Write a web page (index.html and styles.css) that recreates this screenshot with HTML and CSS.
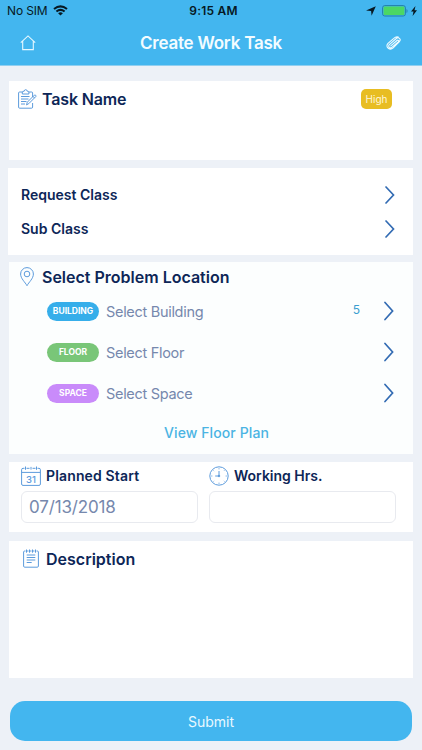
FILE: index.html
```html
<!DOCTYPE html>
<html lang="en">
<head>
<meta charset="utf-8">
<title>Create Work Task</title>
<link rel="stylesheet" href="styles.css">
</head>
<body>
<header class="header">
  <div class="status">
    <div class="status-left"><span>No SIM</span>
      <svg width="15" height="11" viewBox="0 0 15 11" fill="none" stroke="#071923" stroke-width="2"><path d="M1 4.1Q7.5-1.4 14 4.1M3.4 6.6Q7.5 3.1 11.6 6.6"/><path d="M5.1 8.2Q7.5 6.3 9.9 8.2L7.5 10.6Z" fill="#071923" stroke="none"/></svg>
    </div>
    <span class="time">9:15 AM</span>
    <div class="status-right">
      <svg class="arrow" width="10" height="10" viewBox="0 0 10 10"><path d="M9.8.2 5.6 9.7 5.1 5 0 4.6Z" fill="#071923"/></svg>
      <svg width="26" height="12" viewBox="0 0 26 12"><rect x=".6" y=".6" width="22.8" height="10.4" rx="2.2" fill="#42b8e8" stroke="#237eaa" stroke-width="1"/><rect x="1.6" y="1.6" width="20.8" height="8.4" rx="1" fill="#4bd765"/><path d="M24.5 4v4q1-.6 1-2t-1-2" fill="#237eaa"/></svg>
      <svg class="bolt" width="6" height="10" viewBox="0 0 6 10"><path d="M4.5 0 0 5.6h2.500L1.600 10 6 4.200H3.500Z" fill="#071923"/></svg>
    </div>
  </div>
  <div class="nav">
    <svg width="16" height="16" viewBox="0 0 16 16" fill="none" stroke="#e6f8ff" stroke-width="1.1"><path d="M.8 7.700 8 .9l7.200 6.800M2.700 6.200v8.400h10.600V6.200"/></svg>
    <h1>Create Work Task</h1>
    <svg class="clip" width="16" height="14" viewBox="0 0 16 14" fill="none" stroke="#effbff" stroke-width="1.1" stroke-linecap="round"><path d="M4.800 9.900 11 4.500c1-.9 2.200.3 1.200 1.300L6.100 11.200C4.100 13 1.500 10.500 3.300 8.700l7-6.200c2.300-2 5.200.8 3.100 3L7.200 11.900c-1.500 1.400-3.500 1.500-4.900.4-1.700-1.300-1.800-3.300-.3-4.900l5.800-5.100c1.300-1.200 3-1.700 4.500-1.200"/></svg>
  </div>
</header>
<main>
  <section class="card task">
    <svg width="19" height="20" viewBox="0 0 19 20" fill="none" stroke="#5c9bdc"><path d="M4.400 3H1.500Q.6 3 .6 4v14q0 1.200 1 1.200h12q1 0 1-1.200v-4M14.600 8V4q0-1-1-1h-2.800M4.300 5V3q0-.8 1.900-.8Q6.300.7 7.700.7T9.200 2.200q1.700 0 1.700.8v2ZM3 7.500h8.500M3 10h7.500M3 12.500h5.500M3 15h4M8.500 15.900l.8-2.700 7-7q.7-.6 1.400.1t.1 1.300l-7 7ZM15 7.400l1.600 1.700"/></svg>
    <h2>Task Name</h2><span class="priority">High</span>
  </section>
  <section class="card classes">
    <div class="class-row"><span>Request Class</span><svg width="10" height="18" viewBox="0 0 10 18"><path d="m1 1 7.500 8L1 17"/></svg></div>
    <div class="class-row"><span>Sub Class</span><svg width="10" height="18" viewBox="0 0 10 18"><path d="m1 1 7.500 8L1 17"/></svg></div>
  </section>
  <section class="card location">
    <div class="heading"><svg width="14" height="20" viewBox="0 0 14 20" fill="none" stroke="#5c9bdc"><path d="M7 18.700C5.200 15.200.6 11.600.6 7a6.400 6.400 0 0 1 12.800 0c0 4.600-4.600 8.200-6.400 11.700Z"/><circle cx="7" cy="7" r="2.800"/></svg><h2>Select Problem Location</h2></div>
    <div class="place"><b class="blue">BUILDING</b><span>Select Building</span><i>5</i><svg width="10" height="20" viewBox="0 0 10 20"><path d="M1 1.500 8.600 10 1 18.500"/></svg></div>
    <div class="place"><b class="green">FLOOR</b><span>Select Floor</span><svg width="10" height="20" viewBox="0 0 10 20"><path d="M1 1.500 8.600 10 1 18.500"/></svg></div>
    <div class="place"><b class="purple">SPACE</b><span>Select Space</span><svg width="10" height="20" viewBox="0 0 10 20"><path d="M1 1.500 8.600 10 1 18.500"/></svg></div>
    <a class="plan"><span>View Floor Plan</span></a>
  </section>
  <section class="card schedule">
    <div class="start"><div class="label"><svg width="20" height="20" viewBox="0 0 20 20" fill="none" stroke="#5c9bdc"><path d="M3.500 2.300H2q-1.400 0-1.400 1.500V18q0 1.400 1.400 1.400h16q1.400 0 1.400-1.400V3.800q0-1.500-1.400-1.500h-1.500M5.500 2.300h3M11.500 2.300h3M4.500.5v3.300M10 .9v2.700M15.500.5v3.300M.6 6.400h18.800"/><text x="10" y="16.500">31</text></svg><h3 class="wide">Planned Start</h3></div><div class="field"><span>07/13/2018</span></div></div>
    <div class="hours"><div class="label"><svg width="20" height="20" viewBox="0 0 20 20" fill="none" stroke="#5c9bdc"><circle cx="10" cy="10" r="9.200"/><path d="M10 5v5H6.200M10 2.300v1M10 16.700v1M2.300 10h1M16.700 10h1M4.600 4.600l.5.500M14.900 4.900l.5-.5M4.600 15.400l.5-.5M14.900 14.900l.5.500"/><circle cx="10" cy="10" r=".8" fill="#5c9bdc"/></svg><h3>Working Hrs.</h3></div><div class="field"></div></div>
  </section>
  <section class="card description">
    <svg width="16" height="19" viewBox="0 0 16 19" fill="none" stroke="#5c9bdc"><path d="M2.500 2H1.700Q.6 2 .6 3v14q0 1.200 1.100 1.200h12.600q1.100 0 1.100-1.200V3q0-1-1.100-1h-.8M3.500.5v3.200M6.500.5v3.200M9.500.5v3.200M12.500.5v3.200M4 2h1.500M7 2h1.500M10 2h1.500M3.700 6h8.600M3.700 8.500h8.600M3.700 11h8.600M3.700 13.500h5"/></svg><h2>Description</h2>
  </section>
  <button>Submit</button>
</main>
</body>
</html>
```
FILE: styles.css
```css
* { box-sizing: border-box; }
body { margin: 0; width: 422px; height: 750px; overflow: hidden; background: #edf1f7; font-family: Inter, "Liberation Sans", sans-serif; color: #0d2657; }
h1, h2, h3 { margin: 0; font-weight: 600; white-space: nowrap; }
svg { display: block; flex: none; }
span { white-space: nowrap; }
.header { height: 66px; background: #43b6ef; border-bottom: 1px solid #91cff0; }
.status { height: 21px; display: grid; grid-template-columns: 1fr auto 1fr; align-items: center; padding: 0 5px 0 7px; font-size: 12px; color: #071923; }
.status-left, .status-right { display: flex; align-items: center; gap: 6px; }
.status-left span { letter-spacing: -.15px; }
.status-right { justify-content: flex-end; gap: 0; }
.arrow { margin-right: 6px; }
.bolt { margin-left: 3px; }
.time { font-weight: 600; letter-spacing: .2px; padding-left: 3px; }
.nav { height: 43px; display: flex; align-items: center; justify-content: space-between; padding: 0 20px; }
h1 { color: #f3fcff; font-size: 17px; line-height: 22px; letter-spacing: -.22px; }
main { padding: 15px 9px 0; }
.card { background: #fff; }
.task { height: 79px; display: flex; align-items: flex-start; padding: 8px 21px 0 9px; }
h2 { font-size: 16px; line-height: 20px; }
.task h2 { margin-left: 5px; letter-spacing: -.15px; }
.priority { margin-left: auto; width: 31px; height: 20px; border-radius: 5px; background: #e8bd22; color: #fff7d8; font-size: 10px; line-height: 21px; text-align: center; }
.classes { margin: 8px 0 0 -1px; height: 87px; padding: 10px 18px 0 13px; }
.class-row { height: 34px; display: flex; justify-content: space-between; align-items: center; font-size: 14px; font-weight: 600; }
.class-row span { padding-bottom: 2px; }
.classes path, .place path { fill: none; stroke: #326bb3; stroke-width: 1.7; stroke-linecap: round; }
.location { margin-top: 7px; height: 192px; background: #fcfefe; }
.heading { height: 29px; display: flex; align-items: center; gap: 8px; padding-left: 11px; }
.place { height: 41px; display: flex; align-items: center; padding: 0 19px 1px 38px; font-size: 14.5px; color: #7688ad; }
.place span { letter-spacing: -.3px; }
.place b { width: 52px; height: 19px; margin-right: 7px; border-radius: 10px; font-size: 8.5px; line-height: 19px; text-align: center; color: #fff; }
.blue { background: #36aeea; }
.green { background: #79c678; }
.purple { background: #c98bfa; }
.place i { font-style: normal; font-size: 12px; color: #3b9ed0; margin: -3px 24px 0 auto; }
.place span + svg { margin-left: auto; }
.plan { height: 37px; display: flex; align-items: center; justify-content: center; padding-left: 11px; font-size: 14px; font-weight: 500; letter-spacing: .1px; color: #4bb4e3; }
.schedule { margin-top: 8px; height: 70px; padding: 4px 17px 0 12px; display: grid; grid-template-columns: 177px 187px; gap: 11px; }
.label { height: 20px; display: flex; align-items: center; gap: 5px; }
h3 { font-size: 14px; line-height: 20px; }
.wide { letter-spacing: .15px; }
.label text { fill: #5c9bdc; stroke: none; font-size: 9.5px; text-anchor: middle; font-weight: 500; }
.field { height: 32px; margin-top: 5px; border: 1px solid #e8eaef; border-radius: 6px; padding: 0 7px; color: #7688ad; font-size: 17px; line-height: 30px; letter-spacing: -.15px; }
.description { margin-top: 9px; height: 137px; display: flex; align-items: flex-start; gap: 7px; padding: 8px 14px; }
button { display: block; margin: 23px 1px 0; width: 402px; height: 40px; border: 0; border-radius: 15px; background: #43b6ef; color: #e9f9ff; font-family: inherit; font-size: 14px; }
```
